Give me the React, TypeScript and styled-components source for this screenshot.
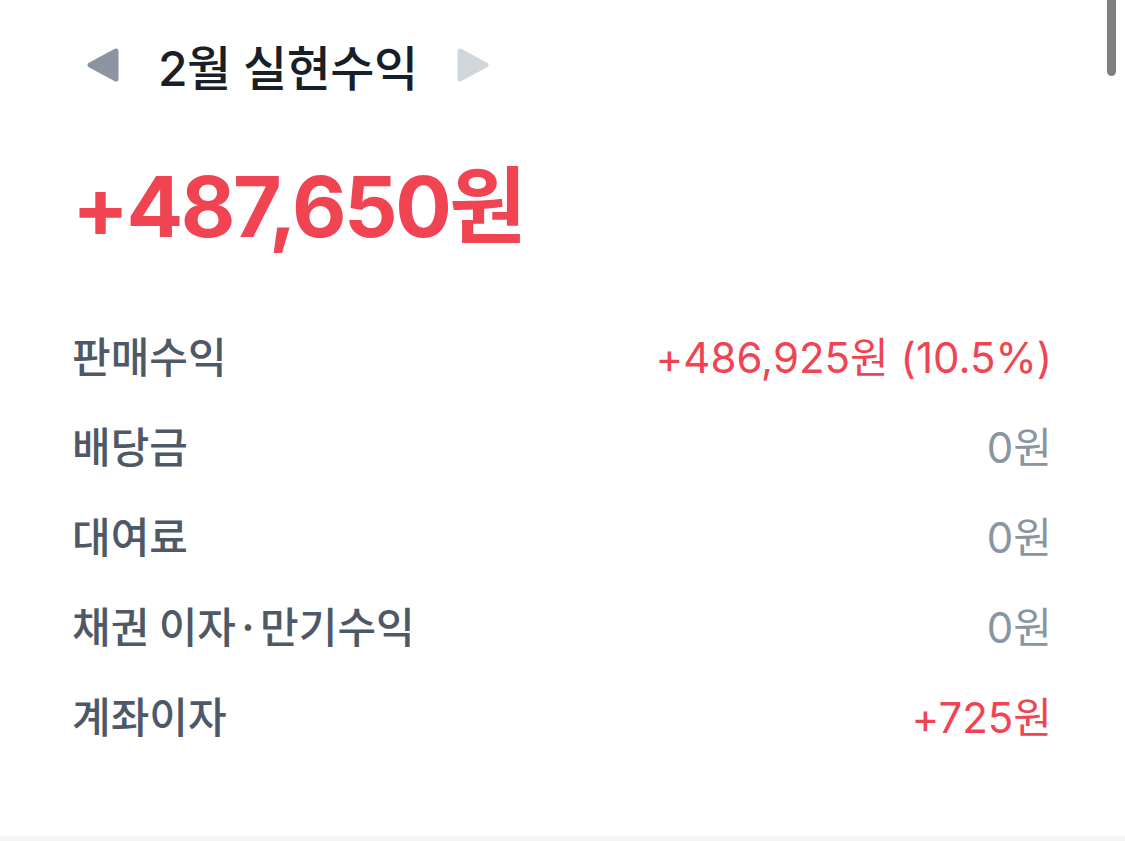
import * as React from 'react';
import styled, { createGlobalStyle } from 'styled-components';

const colors = {
    text: '#191f28',
    label: '#4e5968',
    muted: '#8b95a1',
    disabled: '#d1d6db',
    red: '#f04452',
    divider: '#f2f4f6',
};

const GlobalStyle = createGlobalStyle`
    html, body {
        margin: 0;
        padding: 0;
        background: #ffffff;
    }
    body {
        font-family: Inter, "Noto Sans CJK KR", sans-serif;
        -webkit-font-smoothing: antialiased;
    }
`;

const Page = styled.div`
    width: 1125px;
    height: 841px;
    position: relative;
    overflow: hidden;
    display: flex;
    flex-direction: column;
    background: #ffffff;
`;

const Content = styled.div`
    flex: 1;
    display: flex;
    flex-direction: column;
    padding: 0 73px 0 72px;
`;

const MonthNav = styled.div`
    display: flex;
    align-items: center;
    gap: 38px;
    height: 68px;
    margin-top: 31px;
    padding-left: 14px;
`;

const Title = styled.h1`
    margin: 0;
    font-size: 48px;
    font-weight: 500;
    color: ${colors.text};
    letter-spacing: -0.5px;
`;

const ArrowButton = styled.button<{ disabled?: boolean }>`
    border: 0;
    padding: 0;
    background: none;
    display: flex;
    color: ${(p) => (p.disabled ? colors.disabled : colors.muted)};
`;

const Total = styled.div`
    margin-top: 66px;
    font-size: 84px;
    font-weight: 700;
    color: ${colors.red};
    letter-spacing: -2.5px;
    line-height: 1;
`;

const List = styled.ul`
    list-style: none;
    margin: 60px 0 0;
    padding: 0;
`;

const Row = styled.li`
    height: 90px;
    display: flex;
    align-items: center;
    justify-content: space-between;
`;

const Label = styled.span`
    font-family: "Noto Sans CJK KR", sans-serif;
    font-size: 42px;
    font-weight: 500;
    color: ${colors.label};
`;

const Value = styled.span<{ $positive?: boolean }>`
    font-size: 42px;
    font-weight: 400;
    color: ${(p) => (p.$positive ? colors.red : colors.muted)};
`;

const Divider = styled.div`
    height: 5px;
    background: ${colors.divider};
`;

const ScrollThumb = styled.div`
    position: absolute;
    top: 0;
    right: 9px;
    width: 9px;
    height: 76px;
    border-radius: 0 0 5px 5px;
    background: #7f7f7f;
`;

const Triangle = ({ dir }: { dir: 'left' | 'right' }) => (
    <svg width="34" height="36" viewBox="0 0 34 36">
        <path
            d={dir === 'left' ? 'M30 4 L30 32 L4 18 Z' : 'M4 4 L4 32 L30 18 Z'}
            fill="currentColor"
            stroke="currentColor"
            strokeWidth="5"
            strokeLinejoin="round"
        />
    </svg>
);

const rows = [
    { label: '판매수익', value: '+486,925원 (10.5%)', positive: true },
    { label: '배당금', value: '0원', positive: false },
    { label: '대여료', value: '0원', positive: false },
    { label: '채권 이자·만기수익', value: '0원', positive: false },
    { label: '계좌이자', value: '+725원', positive: true },
];

export default function App() {
    return (
        <Page>
            <GlobalStyle />
            <Content>
                <MonthNav>
                    <ArrowButton aria-label="이전 달">
                        <Triangle dir="left" />
                    </ArrowButton>
                    <Title>2월 실현수익</Title>
                    <ArrowButton disabled aria-label="다음 달">
                        <Triangle dir="right" />
                    </ArrowButton>
                </MonthNav>
                <Total>+487,650원</Total>
                <List>
                    {rows.map((r) => (
                        <Row key={r.label}>
                            <Label>{r.label}</Label>
                            <Value $positive={r.positive}>{r.value}</Value>
                        </Row>
                    ))}
                </List>
            </Content>
            <Divider />
            <ScrollThumb />
        </Page>
    );
}
